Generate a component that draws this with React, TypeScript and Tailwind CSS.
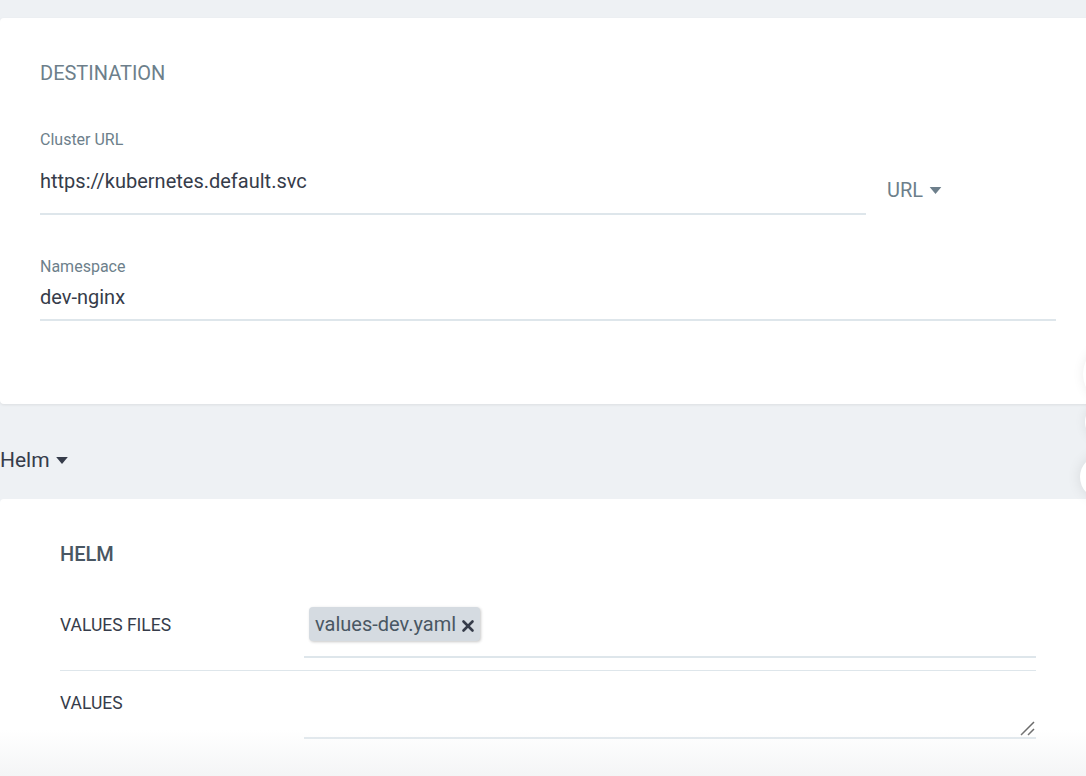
import { X } from "lucide-react";

function Caret({ className = "" }: { className?: string }) {
  return (
    <svg viewBox="0 0 10 6" className={className} fill="currentColor">
      <path d="M0 0h10L5 6z" />
    </svg>
  );
}

export default function App() {
  return (
    <div
      className="relative h-[776px] w-full overflow-hidden bg-[#eef1f4] pt-[18px]"
      style={{ fontFamily: "Roboto, 'Liberation Sans', sans-serif" }}
    >
      {/* Destination card */}
      <section className="mr-[-20px] rounded-l bg-white pb-[83px] pl-[40px] pr-[50px] pt-[43px] shadow-[0_1px_3px_rgba(0,0,0,0.08)]">
        <h2 className="text-[20px] leading-[24px] text-[#6d7f8b]">DESTINATION</h2>

        <div className="mt-[46px] flex items-start gap-[21px]">
          <div className="w-[826px] shrink-0">
            <div className="text-[16px] leading-[18px] text-[#6d7f8b]">Cluster URL</div>
            <div className="border-b-2 border-[#dee6eb] pb-[20px] pt-[20px] text-[20px] leading-[24px] text-[#363c4a]">
              https://kubernetes.default.svc
            </div>
          </div>
          <div className="mt-[47px] flex items-center gap-[6px] text-[20px] leading-[24px] text-[#6d7f8b]">
            URL <Caret className="h-[7px] w-[13px]" />
          </div>
        </div>

        <div className="mt-[43px] w-[1016px]">
          <div className="text-[16px] leading-[18px] text-[#6d7f8b]">Namespace</div>
          <div className="border-b-2 border-[#dee6eb] pb-[10px] pt-[9px] text-[20px] leading-[24px] text-[#363c4a]">
            dev-nginx
          </div>
        </div>
      </section>

      {/* Source type toggle */}
      <div className="mt-[43px] flex items-center gap-[5px] text-[21px] leading-[26px] text-[#363c4a]">
        Helm <Caret className="h-[7px] w-[14px]" />
      </div>

      {/* Helm card */}
      <section className="mt-[26px] mr-[-20px] h-[400px] rounded-l bg-white pl-[60px] pr-[70px] pt-[43px]">
        <h3 className="text-[20px] font-medium leading-[24px] text-[#495763]">HELM</h3>

        <div className="mt-[29px] w-[976px]">
          <div className="grid grid-cols-[244px_1fr] border-b border-[#dee6eb] pb-[12px] pt-[12px]">
            <div className="pt-[8px] text-[17.5px] leading-[20px] text-[#363c4a]">VALUES FILES</div>
            <div className="border-b-2 border-[#dee6eb] pb-[15px] pl-[5px]">
              <span className="inline-flex h-[34px] items-center gap-[3px] rounded bg-[#d5dbe1] pl-[6px] pr-[3px] text-[20px] text-[#495763] shadow-[1px_1px_3px_rgba(0,0,0,0.22)]">
                values-dev.yaml
                <X className="mt-[3px] h-[18px] w-[18px] text-[#363c4a]" strokeWidth={3.5} />
              </span>
            </div>
          </div>
          <div className="grid grid-cols-[244px_1fr]">
            <div className="pt-[22px] text-[17.5px] leading-[20px] text-[#363c4a]">VALUES</div>
            <div className="relative mt-[10px] h-[58px] border-b-2 border-[#dee6eb]">
              <svg viewBox="0 0 16 16" className="absolute bottom-[1px] right-[1px] h-[16px] w-[16px] text-[#6b6b6b]">
                <path d="M2 15L15 2M9 15L15 9" stroke="currentColor" strokeWidth="1.5" />
              </svg>
            </div>
          </div>
        </div>
      </section>

      {/* bottom fade */}
      <div className="pointer-events-none absolute bottom-0 left-0 right-0 h-[46px] bg-gradient-to-b from-white/0 to-[#f4f5f6]" />

      {/* floating buttons peeking in from the right edge */}
      <div className="absolute left-[1083px] top-[344px] h-[60px] w-[60px] rounded-full bg-white shadow-[0_0_12px_rgba(0,0,0,0.08)]" />
      <div className="absolute left-[1085px] top-[402px] h-[40px] w-[40px] rounded-full bg-white shadow-[0_0_12px_rgba(0,0,0,0.08)]" />
      <div className="absolute left-[1080px] top-[455px] h-[44px] w-[44px] rounded-full bg-white shadow-[0_0_14px_rgba(0,0,0,0.1)]" />
    </div>
  );
}
